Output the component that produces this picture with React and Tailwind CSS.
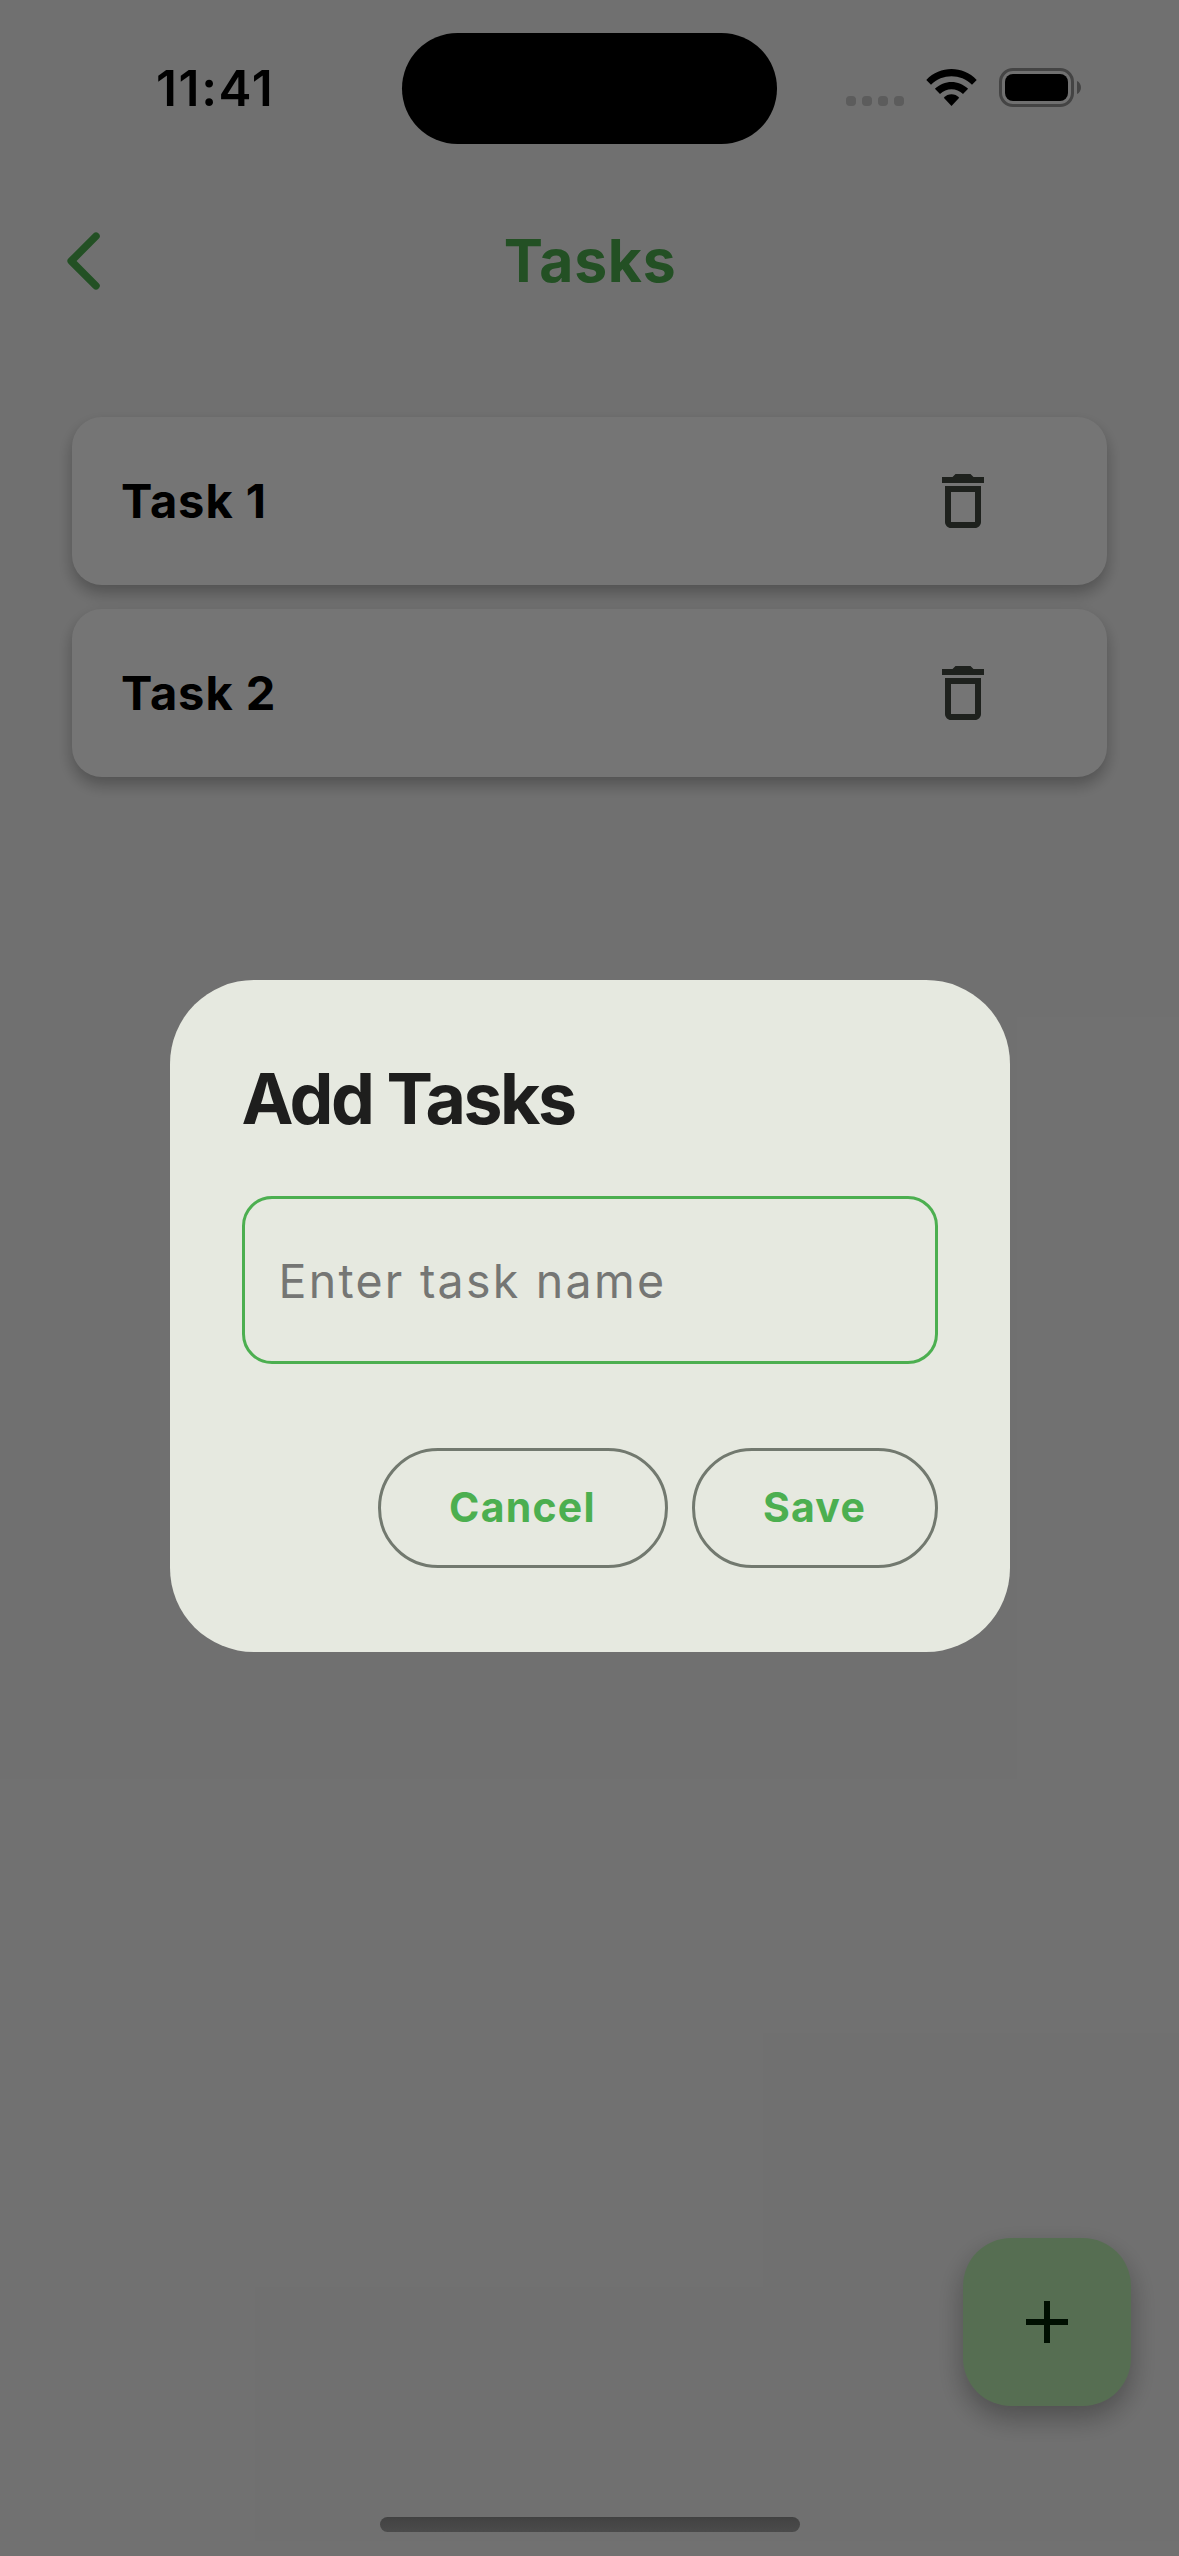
const tasks = ["Task 1", "Task 2"];

function StatusBar() {
  return (
    <header className="relative z-20 grid h-[177px] grid-cols-[402px_375px_402px] items-start">
      <time className="mt-[58px] pl-[156px] text-[49.5px] leading-[60px] font-semibold tracking-[1.65px] text-black">
        11:41
      </time>
      <div className="mt-[33px] h-[111px] rounded-full bg-black" />
      <div className="mt-[68px] flex h-[39px] pl-[69px]">
        <div className="mt-[28px] flex gap-[6px]">
          {[0, 1, 2, 3].map((dot) => (
            <span key={dot} className="size-[10px] rounded-[4px] bg-[#5c5c5c]" />
          ))}
        </div>
        <svg className="ml-[22px] h-[39px] w-[51px]" viewBox="0 0 51 39" aria-hidden="true">
          <path d="M0.3 11.9 C14.2 -2.6 36.8 -2.6 50.7 11.9 L46 16.7 C34.6 5.4 16.4 5.4 5 16.7 Z" />
          <path d="M8.9 20.8 C18.2 11.6 32.8 11.6 42.1 20.8 L37 26 C30.7 19.6 20.3 19.6 14 26 Z" />
          <path d="M17.8 29.8 C22 25.2 29 25.2 33.2 29.8 L25.5 38 Z" />
        </svg>
        <div className="ml-[22px] h-[39px] w-[75px] rounded-[14px] border-[3px] border-[#444444] p-[3px]">
          <div className="h-full rounded-[8px] bg-black" />
        </div>
        <svg className="mt-[13px] ml-[3px] h-[13px] w-[4px]" viewBox="0 0 4 13" aria-hidden="true">
          <path d="M0 0 C5.3 2.2 5.3 10.8 0 13 Z" fill="#444444" />
        </svg>
      </div>
    </header>
  );
}

function TaskCard({ name }) {
  return (
    <li className="flex h-[168px] items-center justify-between rounded-[30px] bg-white pr-[108px] pl-[49px] shadow-[0_8px_16px_rgba(0,0,0,0.28)]">
      <span className="pb-px text-[47px] leading-[60px] font-[670] tracking-[0.95px] text-black">
        {name}
      </span>
      <button type="button" aria-label={`Delete ${name}`}>
        <svg className="size-[72px]" viewBox="0 0 24 24" fill="#424940">
          <path d="M6 19c0 1.1.9 2 2 2h8c1.1 0 2-.9 2-2V7H6v12zM8 9h8v10H8V9zm7.5-5-1-1h-5l-1 1H5v2h14V4z" />
        </svg>
      </button>
    </li>
  );
}

function AddTaskDialog() {
  return (
    <div className="absolute inset-0 z-10 flex items-center justify-center bg-black/54 pt-[177px] pb-[102px]">
      <section
        role="dialog"
        aria-label="Add Tasks"
        className="flex h-[672px] w-[840px] flex-col rounded-[84px] bg-[#e6e9e0] px-[72px] pt-[71px]"
      >
        <h2 className="h-[97px] text-[69.7px] leading-[96px] font-bold tracking-[-2.45px] text-[#1e1e1d]">
          Add Tasks
        </h2>
        <input
          type="text"
          placeholder="Enter task name"
          className="mt-[48px] h-[168px] w-full rounded-[30px] border-[3px] border-[#4caf50] bg-transparent pt-[3px] pl-[34px] text-[46.5px] tracking-[2.25px] outline-none placeholder:text-[#757674]"
        />
        <div className="mt-[84px] flex justify-end gap-[24px] text-[41px] font-[670] tracking-[1.25px] text-[#4caf50]">
          <button type="button" className="h-[120px] w-[290px] rounded-full border-[3px] border-[#72796f] pt-px">
            Cancel
          </button>
          <button type="button" className="h-[120px] w-[246px] rounded-full border-[3px] border-[#72796f] pt-px">
            Save
          </button>
        </div>
      </section>
    </div>
  );
}

export default function App() {
  return (
    <div className="relative flex h-[2556px] w-[1179px] flex-col overflow-hidden bg-[#f5f5f5] font-['Inter',sans-serif]">
      <StatusBar />
      <nav className="grid h-[168px] grid-cols-[200px_1fr_200px] items-center">
        <button type="button" aria-label="Back" className="ml-[60px] w-[48px]">
          <svg
            className="h-[60px] w-[48px]"
            viewBox="0 0 48 60"
            fill="none"
            stroke="#4caf50"
            strokeWidth="7.5"
            strokeLinecap="round"
            strokeLinejoin="round"
          >
            <path d="M36 5.2 L11.2 30 L36 54.8" />
          </svg>
        </button>
        <h1 className="pb-px pl-px text-center text-[58.8px] leading-[72px] font-[670] tracking-[0.7px] text-[#4caf50]">
          Tasks
        </h1>
      </nav>
      <ul className="mt-[72px] flex grow flex-col gap-[24px] px-[72px]">
        {tasks.map((name) => (
          <TaskCard key={name} name={name} />
        ))}
      </ul>
      <button
        type="button"
        aria-label="Add task"
        className="mr-[48px] mb-[111px] flex size-[168px] items-center justify-center self-end rounded-[48px] bg-[#bcf0b4] shadow-[0_12px_28px_rgba(0,0,0,0.3)]"
      >
        <svg className="size-[72px]" viewBox="0 0 24 24" fill="#002204">
          <path d="M19 13h-6v6h-2v-6H5v-2h6V5h2v6h6v2z" />
        </svg>
      </button>
      <div className="relative z-20 mb-[24px] h-[15px] w-[420px] self-center rounded-full bg-linear-to-b from-[#424242] to-[#4b4b4b]" />
      <AddTaskDialog />
    </div>
  );
}
